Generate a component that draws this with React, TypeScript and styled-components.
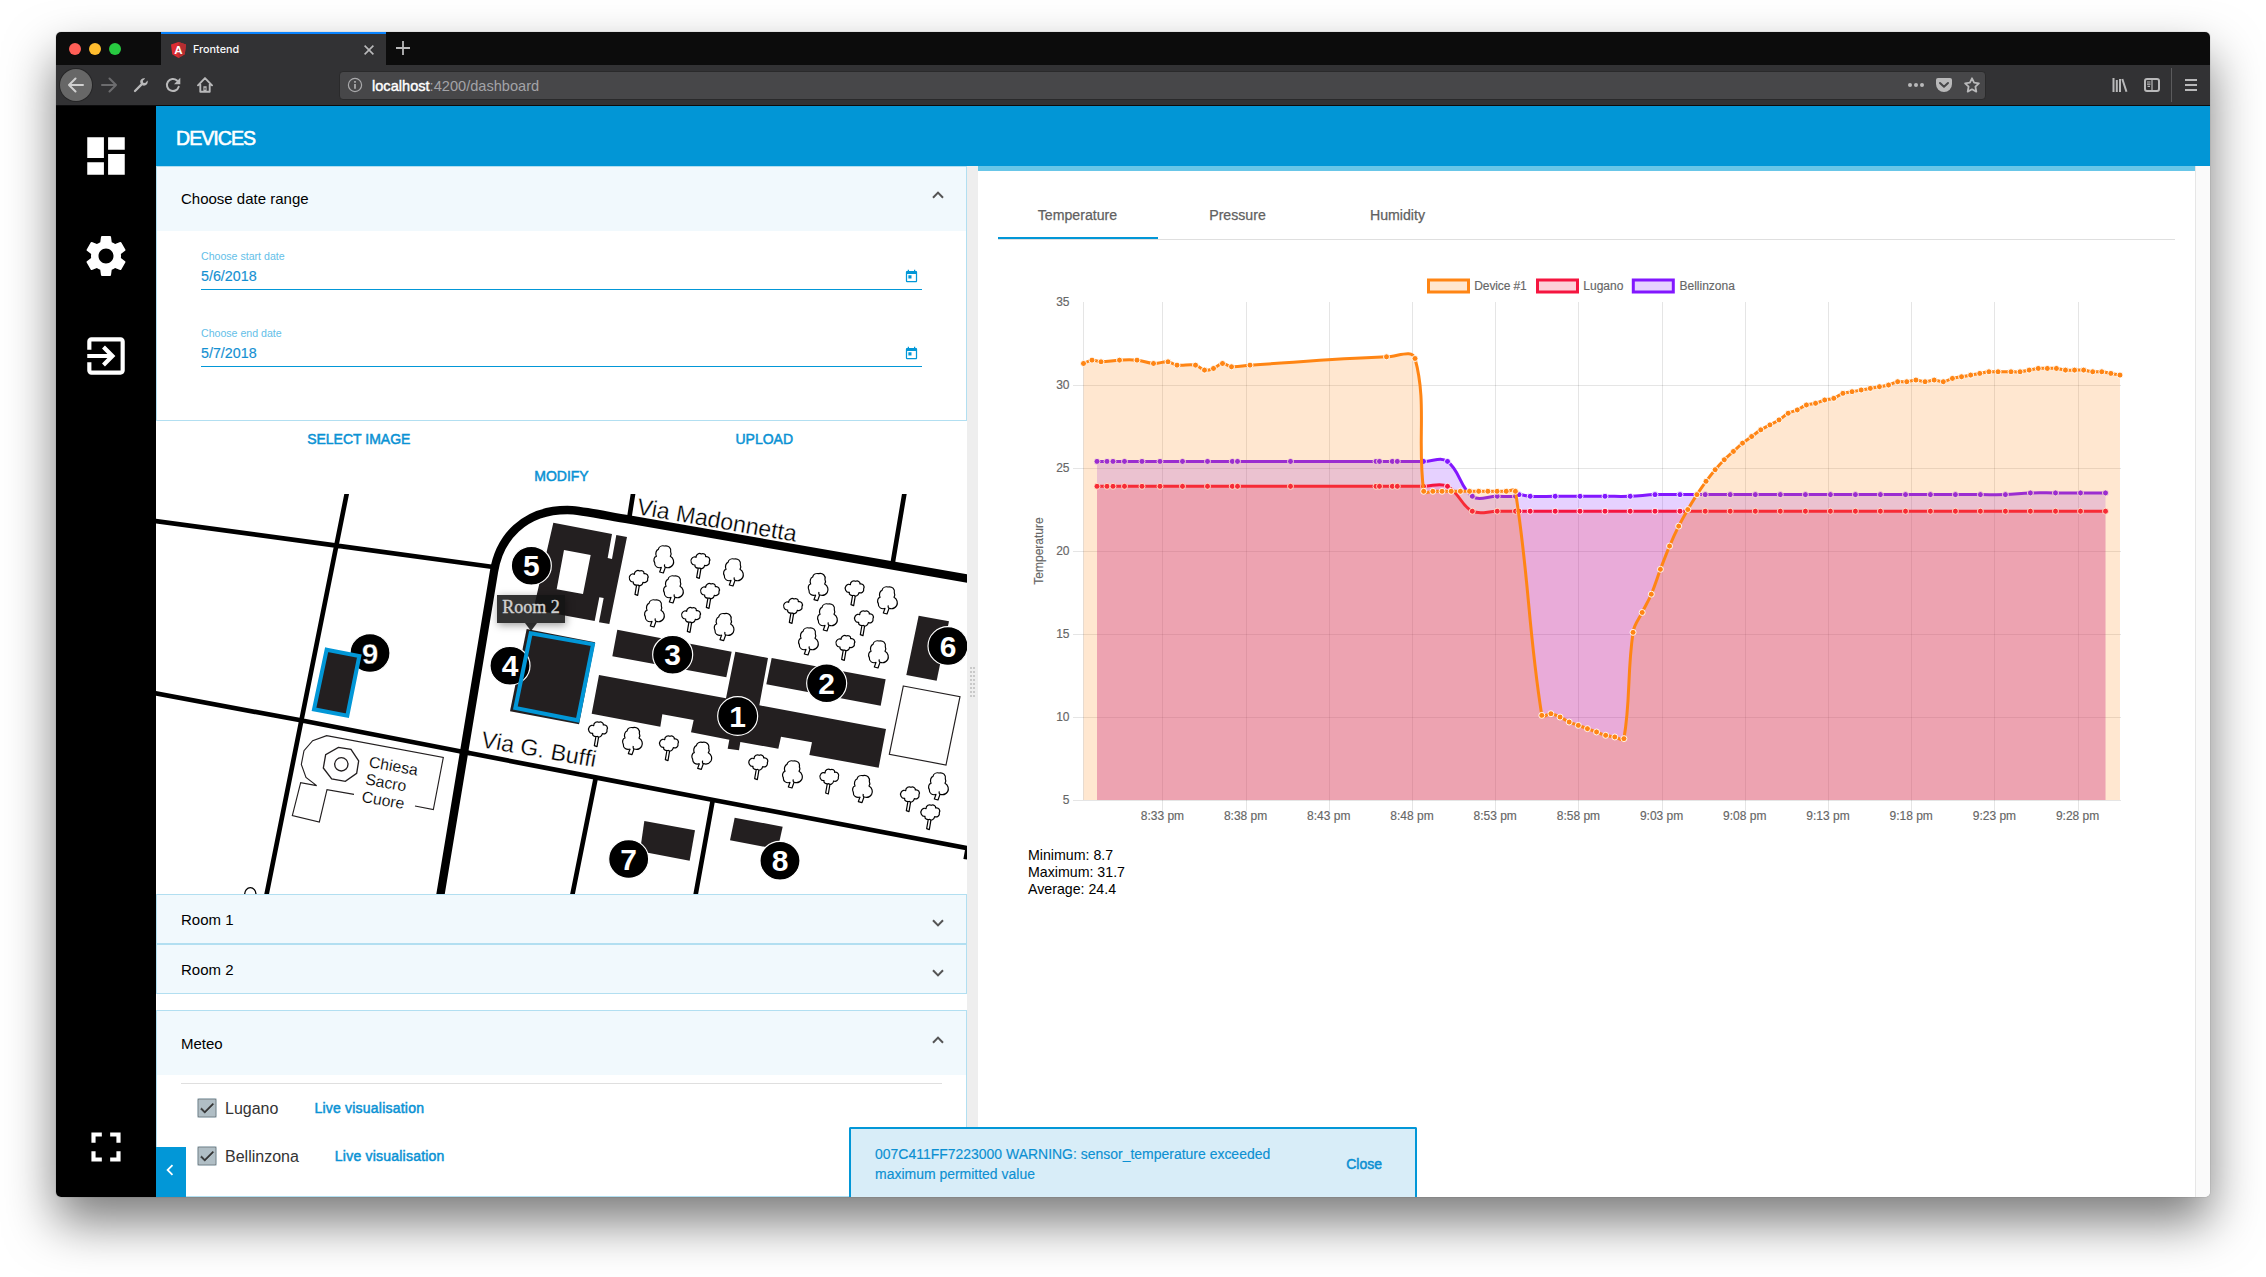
import React from "react";
import styled, { createGlobalStyle } from "styled-components";
import {
  MdDashboard,
  MdSettings,
  MdExitToApp,
  MdFullscreen,
  MdToday,
  MdChevronLeft,
  MdCheck,
} from "react-icons/md";

const BLUE = "#0297d7";
const PALE = "#f1f9fd";
const EDGE = "#b2dff1";
const INK = "#231f20";

const GlobalStyle = createGlobalStyle`
  html, body { margin: 0; padding: 0; background: #fff; overflow: hidden; }
  body { font-family: "Liberation Sans", Arial, Helvetica, sans-serif; color: #000; }
  *, *::before, *::after { box-sizing: border-box; }
  svg { display: block; flex: none; }
`;

/* ---------- window ---------- */

const Stage = styled.div`
  width: 2266px;
  height: 1277px;
  padding: 32px 56px 80px;
  overflow: hidden;
`;

const Window = styled.div`
  width: 2154px;
  height: 1165px;
  display: flex;
  flex-direction: column;
  border-radius: 5px;
  overflow: hidden;
  background: #fff;
  box-shadow: 0 0 1px rgba(0, 0, 0, 0.5), 0 25px 50px rgba(0, 0, 0, 0.52);
`;

const TabStrip = styled.div`
  height: 33px;
  flex: none;
  display: flex;
  background: #0c0c0c;
`;

const Lights = styled.div`
  width: 105px;
  padding-left: 13px;
  display: flex;
  align-items: center;
  gap: 8px;
`;

const Light = styled.span<{ $c: string }>`
  width: 12px;
  height: 12px;
  border-radius: 50%;
  margin-top: 1px;
  background: ${(p) => p.$c};
`;

const BrowserTab = styled.div`
  width: 225px;
  border-top: 2px solid #0a84ff;
  background: #323234;
  display: flex;
  align-items: center;
  padding: 0 12px 0 10px;
`;

const TabTitle = styled.span`
  flex: 1;
  margin-left: 7px;
  color: #f9f9fa;
  font: 500 10.8px/16px Inter, "Liberation Sans", sans-serif;
`;

const NewTab = styled.div`
  padding: 9px 0 0 10px;
`;

const Toolbar = styled.div`
  height: 41px;
  flex: none;
  display: flex;
  align-items: center;
  background: #323234;
  border-bottom: 1px solid #0c0c0d;
`;

const NavButtons = styled.div`
  width: 283px;
  padding-left: 4px;
  display: flex;
  align-items: center;
`;

const BackButton = styled.div`
  width: 32px;
  height: 32px;
  border-radius: 50%;
  background: #676767;
  box-shadow: 0 0 0 1px #262627;
  display: grid;
  place-items: center;
  margin-right: 1px;
`;

const NavIcon = styled.div`
  width: 32px;
  display: grid;
  place-items: center;
`;

const UrlBar = styled.div`
  width: 1647px;
  height: 29px;
  border-radius: 4px;
  background: #474749;
  border: 1px solid #2a2a2b;
  display: flex;
  align-items: center;
  padding: 0 5px 0 7px;
`;

const UrlText = styled.span`
  flex: 1;
  margin-left: 9px;
  padding-top: 2px;
  color: #a3a3a7;
  font-size: 14.6px;
  line-height: 20px;
  b {
    font-weight: 400;
    color: #fff;
    -webkit-text-stroke: 0.4px #fff;
  }
`;

const UrlIcons = styled.div`
  display: flex;
  gap: 12px;
  align-items: center;
`;

const ToolIcons = styled.div`
  flex: 1;
  display: flex;
  align-items: center;
  justify-content: flex-end;
  padding-right: 13px;
`;

const IconPair = styled.div`
  display: flex;
  gap: 16px;
`;

const Separator = styled.div`
  width: 1px;
  height: 34px;
  background: #5b5b5d;
  margin: 0 13px 0 11px;
`;

/* ---------- app shell ---------- */

const Shell = styled.div`
  flex: 1;
  display: flex;
  min-height: 0;
`;

const Sidebar = styled.nav`
  width: 100px;
  flex: none;
  background: #000;
  color: #fff;
  display: flex;
  flex-direction: column;
  align-items: center;
  gap: 50px;
  padding: 25px 0;
`;

const SideBottom = styled.div`
  margin-top: auto;
`;

const Main = styled.main`
  flex: 1;
  min-width: 0;
  display: flex;
  flex-direction: column;
  position: relative;
`;

const Header = styled.header`
  height: 60px;
  flex: none;
  background: #0296d6;
  color: #fff;
  padding: 5px 0 0 20px;
  display: flex;
  align-items: center;
  font-size: 19.6px;
  letter-spacing: -1px;
  -webkit-text-stroke: 0.6px #fff;
`;

const Split = styled.div`
  flex: 1;
  display: flex;
  min-height: 0;
`;

const LeftPane = styled.section`
  width: 811px;
  flex: none;
  display: flex;
  flex-direction: column;
`;

const Gutter = styled.div`
  width: 11px;
  flex: none;
  background: #eee;
  display: flex;
  padding: 501px 0 0 3px;
`;

const Grip = styled.div`
  display: grid;
  grid-template-columns: 2px 2px;
  grid-auto-rows: 2px;
  gap: 2px 1px;
  height: 30px;
`;

const Dot = styled.i`
  background: #c9c9c9;
`;

const RightPane = styled.section`
  flex: 1;
  border-top: 5px solid #68c6e8;
  padding: 20px 20px 0;
`;

const ScrollTrack = styled.div`
  width: 15px;
  flex: none;
  background: #fafafa;
  border-left: 1px solid #e6e6e6;
`;

/* ---------- expansion panels ---------- */

const Panel = styled.div<{ $h: number; $top?: number }>`
  height: ${(p) => p.$h}px;
  margin-top: ${(p) => p.$top ?? 0}px;
  flex: none;
  border: 1px solid ${EDGE};
  background: #fff;
`;

const PanelHead = styled.div<{ $h: number; $pad?: number }>`
  height: ${(p) => p.$h}px;
  background: ${PALE};
  display: flex;
  justify-content: space-between;
  align-items: center;
  padding: ${(p) => p.$pad ?? 0}px 22px 0 24px;
  font-size: 15px;
  line-height: 20px;
`;

const ChevronBox = styled.span<{ $dy: number }>`
  margin-top: ${(p) => p.$dy}px;
`;

const Field = styled.div<{ $top: number }>`
  margin: ${(p) => p.$top}px 44px 0;
`;

const FieldLabel = styled.div`
  height: 16px;
  font-size: 10.6px;
  line-height: 17px;
  color: #64c0e8;
`;

const FieldValue = styled.div`
  height: 26px;
  border-bottom: 1px solid ${BLUE};
  display: flex;
  align-items: center;
  justify-content: space-between;
  padding-right: 3px;
  font-size: 14.3px;
  line-height: 25px;
  color: #1490d2;
  -webkit-text-stroke: 0.15px #1490d2;
`;

const Actions = styled.div`
  height: 73px;
  flex: none;
  display: grid;
  grid-template-columns: 1fr 1fr;
  grid-template-rows: 36px 37px;
`;

const ActionLink = styled.div<{ $wide?: boolean }>`
  grid-column: ${(p) => (p.$wide ? "1 / -1" : "auto")};
  display: grid;
  place-items: center;
  color: #0a92d4;
  font-size: 14px;
  -webkit-text-stroke: 0.5px #0a92d4;
`;

const MapFrame = styled.div`
  position: relative;
  height: 400px;
  flex: none;
  overflow: hidden;
`;

const MapTip = styled.div`
  position: absolute;
  left: 341px;
  top: 101px;
  width: 68px;
  height: 28px;
  background: rgba(20, 20, 20, 0.87);
  color: #d0d0d0;
  font: 18px/25px "Liberation Serif", "Times New Roman", serif;
  -webkit-text-stroke: 0.4px #d0d0d0;
  text-align: center;
  box-shadow: 1px 2px 8px rgba(0, 0, 0, 0.4);
  &::after {
    content: "";
    position: absolute;
    left: 28px;
    top: 28px;
    border: 6px solid transparent;
    border-top: 8px solid rgba(20, 20, 20, 0.87);
    border-bottom: 0;
  }
`;

const Rule = styled.div`
  height: 1px;
  margin: 8px 24px 0;
  background: #dfdfdf;
`;

const CheckRow = styled.div<{ $top: number }>`
  margin: ${(p) => p.$top}px 0 0 40px;
  height: 20px;
  display: flex;
  align-items: center;
  font-size: 16px;
  line-height: 20px;
  color: #333;
`;

const CheckBox = styled.span`
  width: 20px;
  height: 20px;
  border-radius: 2px;
  margin-right: 8px;
  background: #b0bec5;
  display: grid;
  place-items: center;
  svg {
    stroke: #333;
    stroke-width: 0.6px;
  }
`;

const PlaceName = styled.span`
  padding-top: 1px;
`;

const LiveLink = styled.span`
  margin-left: 36px;
  color: #0a92d4;
  font-size: 14px;
  letter-spacing: 0.22px;
  -webkit-text-stroke: 0.5px #0a92d4;
`;

const Collapse = styled.div`
  position: absolute;
  left: 0;
  bottom: 0;
  width: 30px;
  height: 50px;
  background: ${BLUE};
  color: #fff;
  padding: 12px 0 0 3px;
`;

/* ---------- right side ---------- */

const Tabs = styled.div`
  display: flex;
  height: 49px;
  border-bottom: 1px solid #dfdfdf;
`;

const Tab = styled.div<{ $active?: boolean }>`
  width: 160px;
  height: 48px;
  border-bottom: 2px solid ${(p) => (p.$active ? BLUE : "transparent")};
  display: grid;
  place-items: center;
  padding: 2px 1px 0 0;
  color: #616161;
  font-size: 14.15px;
  -webkit-text-stroke: 0.25px #616161;
`;

const Stats = styled.div`
  padding: 7px 0 0 30px;
  font-size: 14.2px;
  line-height: 17px;
`;

const Toast = styled.div`
  position: absolute;
  left: 693px;
  bottom: 0;
  width: 568px;
  height: 70px;
  border: 2px solid ${BLUE};
  border-bottom: 0;
  border-radius: 2px 2px 0 0;
  background: #d8edf8;
  color: #0c90d2;
  display: flex;
  justify-content: space-between;
  align-items: center;
  padding: 1px 33px 0 24px;
  font-size: 13.97px;
  line-height: 20px;
  -webkit-text-stroke: 0.15px #0c90d2;
`;

const ToastText = styled.div`
  width: 410px;
`;

const ToastClose = styled.div`
  -webkit-text-stroke: 0.5px #0c90d2;
`;

/* ---------- small drawings ---------- */

const Chevron = ({ up }: { up?: boolean }) => (
  <svg width="12" height="8" viewBox="0 0 12 8" fill="none" stroke="#555" strokeWidth="2">
    <path d={up ? "M1 6.8 6 1.6l5 5.2" : "M1 1.2 6 6.4l5-5.2"} />
  </svg>
);

const Angular = () => (
  <svg width="15" height="16" viewBox="0 0 15 16">
    <path d="M7.5 0 0 2.6l1.2 9.7L7.5 16l6.3-3.7L15 2.6z" fill="#dd2c32" />
    <path d="M7.5 0v16l6.3-3.7L15 2.6z" fill="#b52e31" />
    <text x="7.5" y="12" fontSize="11.5" fontWeight="700" textAnchor="middle" fill="#fff">
      A
    </text>
  </svg>
);

const G = "#b9b9ba";

const ArrowIcon = ({ color, flip }: { color: string; flip?: boolean }) => (
  <svg
    width="16"
    height="16"
    viewBox="0 0 16 16"
    fill="none"
    stroke={color}
    strokeWidth="2"
    strokeLinecap="round"
    strokeLinejoin="round"
  >
    <path d={flip ? "M1 8h14M8.5 1.5 15 8l-6.5 6.5" : "M15 8H1M7.5 1.5 1 8l6.5 6.5"} />
  </svg>
);

const Wrench = () => (
  <svg width="16" height="16" viewBox="0 0 16 16">
    <path d="M2 14 8.6 7.4" stroke={G} strokeWidth="2.3" strokeLinecap="round" />
    <path
      d="M14.6 3.6 12.2 6 10.2 5.7 9.8 3.8l2.4-2.4C10 .6 7.3 2 7.2 4.6c0 .8.1 1.4.5 2L9.3 8.3c2.8 1.3 6.2-1 5.3-4.7z"
      fill={G}
    />
  </svg>
);

const Reload = () => (
  <svg width="16" height="16" viewBox="0 0 16 16">
    <path d="M13.7 9.7A6 6 0 1 1 12 3.6" fill="none" stroke={G} strokeWidth="2" strokeLinecap="round" />
    <path d="M15.3.8v6.4H9z" fill={G} />
  </svg>
);

const Home = () => (
  <svg
    width="16"
    height="16"
    viewBox="0 0 16 16"
    fill="none"
    stroke={G}
    strokeWidth="1.9"
    strokeLinejoin="round"
    strokeLinecap="round"
  >
    <path d="M1 8.3 8 1.1l7 7.2M3.3 7.6v7.1h9.4V7.6" />
    <path d="M6.4 14V9.2h3.2V14z" fill={G} stroke="none" />
    <path d="M8 11.2v1.2" stroke="#323234" strokeWidth="1" />
  </svg>
);

const Info = () => (
  <svg width="16" height="16" viewBox="0 0 16 16" fill="none" stroke="#a9a9ab" strokeWidth="1.2">
    <circle cx="8" cy="8" r="6.6" />
    <path d="M8 7v4.8M8 4v1.8" strokeWidth="1.8" />
  </svg>
);

const Library = () => (
  <svg width="16" height="16" viewBox="0 0 16 16" fill="none" stroke={G} strokeWidth="2">
    <path d="M1.5 1v14M4.8 3v12M8 2v13M10.3 2l4.2 12.8" />
  </svg>
);

const SidebarIcon = () => (
  <svg width="16" height="16" viewBox="0 0 16 16" fill="none" stroke={G}>
    <rect x="1" y="2" width="14" height="12" rx="2" strokeWidth="2" />
    <path d="M8 2v12M3 5h3.5M3 7.2h3.5M3.5 9.4h2.5" strokeWidth="1.2" />
  </svg>
);

/* ---------- campus map ---------- */

const WEST = "translate(-6 -14) scale(.33333)";
const EAST = "translate(324 -14) scale(.33333)";

const TALL_TREES = [
  [521, 196], [730, 235], [550, 286], [493, 358], [702, 399], [984, 279], [1192, 319], [1012, 370],
  [955, 442], [1165, 481], [427, 741], [635, 785], [907, 841], [1117, 885], [1345, 877],
];

const SMALL_TREES = [
  [632, 219], [447, 270], [661, 309], [604, 381], [1095, 301], [910, 354], [1123, 391], [1067, 465],
  [325, 724], [538, 766], [806, 823], [1019, 866], [1261, 919], [1322, 973],
];

const BADGES: [number, number, number][] = [
  [5, 154, 257], [4, 90, 557], [3, 578, 524], [2, 1040, 610], [1, 773, 708], [6, 1404, 498], [7, 446, 1137], [8, 900, 1142],
];

const Badge = ({ n, x, y }: { n: number; x: number; y: number }) => (
  <g>
    <ellipse cx={x} cy={y} rx="60" ry="58" fill="#000" stroke="#fff" strokeWidth="3.5" />
    <text x={x} y={y + 32} fontSize="90" fontWeight="700" textAnchor="middle" fill="#fff">
      {n}
    </text>
  </g>
);

const MapLabel = styled.text`
  font-family: "Liberation Sans", Arial, sans-serif;
  fill: #000;
  stroke: #fff;
`;

const CampusMap = () => (
  <svg width="811" height="400" viewBox="0 0 811 400">
    <g transform={EAST} fill="none" stroke="#000">
      <path d="M-123 1270 42 275C58 175 130 90 262 90c35 0 90 12 188 29l1030 180" strokeWidth="25" />
      <path d="M461 30 448 112M1275 30l-37 220M347 895l-73 365M698 962l-54 298M1463 1105l-6 33" strokeWidth="14" />
      <path d="M-60 814 350 893l350 67 770 146" strokeWidth="14" />
    </g>
    <g transform={WEST} fill="none" stroke="#000">
      <path d="M0 121 560 197l470 64M593 27 346 1262M0 637l452 84 508 99" strokeWidth="14" />
      <g stroke={INK} strokeWidth="3.4">
        <path d="M795 978l55 11 30-157-350-65-42 15-26 30-8 41 14 39 32 25-48-9-25 99 81 19 23-97 81 14" />
        <path d="M565 802l38 6 23 35-6 37-34 24-41-7-25-33 7-40z" strokeWidth="4" />
        <circle cx="574" cy="853" r="20" strokeWidth="4" />
        <ellipse cx="301" cy="1243" rx="17" ry="20" stroke="#000" strokeWidth="4" />
      </g>
      <MapLabel strokeWidth="0.4" fontSize="47.5" transform="translate(655 861) rotate(10)">Chiesa</MapLabel>
      <MapLabel strokeWidth="0.4" fontSize="47.5" transform="translate(644 913) rotate(10)">Sacro</MapLabel>
      <MapLabel strokeWidth="0.4" fontSize="47.5" transform="translate(633 965) rotate(10)">Cuore</MapLabel>
      <Badge n={9} x={660} y={519} />
      <path d="M530 509l98 19-36 179-100-19z" fill={INK} stroke={BLUE} strokeWidth="12" />
    </g>
    <g transform={EAST}>
      <g fill={INK}>
        <path
          fillRule="evenodd"
          d="M220 128l176 34-13 72 13 3 13-72 32 6-53 261-31-5 14-73-13-2-14 71-184-34zM252 210l80 15-23 117-79-14z"
        />
        <path d="M140 447l205 40-48 246-207-39z" />
        <path d="M412 449l343 66-16 77-342-63z" />
        <path d="M875 534l342 64-15 79-343-64z" />
        <path d="M357 585l381 70 28-140 98 19-26 142 380 71-22 116-208-38 8-38-93-17-8 36-114-20-4 25-34-5 5-27-115-22 8-37-94-17-6 37-206-39z" />
        <path d="M1316 407l91 17-37 178-91-17z" />
        <path d="M493 1023l152 28-16 91-149-28z" />
        <path d="M764 1013l144 27-15 68-143-27z" />
      </g>
      <path d="M1270 618l170 32-42 205-170-32z" fill="#fff" stroke={INK} strokeWidth="3.5" />
      <g fill="#fff" stroke="#000" strokeWidth="3.6" strokeLinejoin="round">
        {TALL_TREES.map(([x, y]) => (
          <g key={`${x}-${y}`} transform={`translate(${x} ${y})`}>
            <path d="M23 66 18 80l11 3 6-17" />
            <path d="M24 66C12 70 2 63 3 52 -2 44 2 34 8 33 4 24 8 14 14 12 16 4 24 0 32 2 44 -1 54 8 51 20 54 25 52 30 50 33 60 38 62 50 58 58 52 67 42 68 36 66 32 66 32 60 33 57" />
          </g>
        ))}
        {SMALL_TREES.map(([x, y]) => (
          <g key={`${x}-${y}`} transform={`translate(${x} ${y})`}>
            <path d="M23 44 18 73l8 3 5-30" />
            <path d="M13 36C3 37-3 24 3 17 6 11 13 11 16 13 16 3 26-1 32 3 38 0 46 4 45 11 54 9 60 18 56 25 58 34 49 40 42 37 40 47 31 49 27 45 19 47 11 43 13 36z" />
          </g>
        ))}
      </g>
      {BADGES.map(([n, x, y]) => (
        <Badge key={n} n={n} x={x} y={y} />
      ))}
      <path d="M152 460l187 33-46 228-187-37z" fill="none" stroke={BLUE} strokeWidth="12" />
      <MapLabel strokeWidth="0.8" fontSize="69.5" transform="translate(468 102) rotate(9.900)">
        Via Madonnetta
      </MapLabel>
      <MapLabel strokeWidth="0.8" fontSize="69.5" transform="translate(1 801) rotate(10)">
        Via G. Buffi
      </MapLabel>
    </g>
  </svg>
);

/* ---------- chart ---------- */

type Pt = { x: number; y: number };

const BASE = 302.05;
const yOf = (v: number) => BASE + (35 - v) * 16.6;

const ORANGE_DATA: [number, number][] = [
  [1083.5, 31.3], [1092, 31.5], [1101, 31.4], [1119.5, 31.5], [1137, 31.5], [1153.5, 31.3], [1168, 31.4],
  [1177, 31.2], [1195.5, 31.2], [1204.5, 30.9], [1213.5, 31], [1222.5, 31.3], [1231.5, 31.1], [1250, 31.2],
  [1386.5, 31.7], [1415, 31.6],
  ...Array.from({ length: 11 }, (_, i) => [1423.7 + i * 9.17, 23.6] as [number, number]),
  ...[10.1, 10.2, 10, 9.7, 9.5, 9.3, 9.1, 8.9, 8.8, 8.7, 15.1, 16.3, 17.4, 18.9, 20.3, 21.5, 22.5, 23.4, 24.2,
    24.9, 25.5, 26, 26.5, 26.9, 27.3, 27.6, 27.9, 28.3, 28.5, 28.8, 28.9, 29.1, 29.2, 29.5, 29.6, 29.7, 29.8,
    29.9, 30, 30.2, 30.2, 30.3, 30.2, 30.3, 30.2, 30.4, 30.5, 30.6, 30.7, 30.8, 30.8].map(
    (v, i) => [1541.8 + i * 9.125, v] as [number, number],
  ),
  ...[30.8, 30.8, 30.9, 31, 31, 31, 30.9, 30.9, 30.9, 30.8, 30.8, 30.7, 30.6].map(
    (v, i) => [2011 + i * 9.08, v] as [number, number],
  ),
];

const METEO_X = [
  1097, 1107, 1113, 1124.5, 1142, 1160, 1182.5, 1207.5, 1232.3, 1237.5, 1290.5, 1376, 1379.5, 1392.3, 1397.3, 1423.5,
  1447.5, 1472.3, 1497.2, 1515.5, 1519, 1530.2, 1555.2, 1580, 1605, 1630.2, 1655, 1680, 1705.2, 1730.2, 1755.3, 1780.3,
  1805.4, 1830.4, 1855.4, 1880.4, 1905.5, 1930.4, 1955.4, 1980.4, 2005.4, 2030.4, 2055.5, 2080.5, 2105.5,
];

const LUGANO = METEO_X.map((x, i) => [x, i < 17 ? 23.9 : 22.4] as [number, number]);

const BELLINZONA = METEO_X.map((x, i) => {
  if (i < 17) return [x, 25.4] as [number, number];
  if (i === 20) return [x, 23.4] as [number, number];
  if (i < 26) return [x, 23.3] as [number, number];
  return [x, i < 41 ? 23.4 : 23.5] as [number, number];
});

function spline(pts: Pt[], t = 0.4) {
  const ctl = pts.map((c, i) => {
    const p = pts[i - 1] ?? c;
    const n = pts[i + 1] ?? c;
    const d01 = Math.hypot(c.x - p.x, c.y - p.y);
    const d12 = Math.hypot(n.x - c.x, n.y - c.y);
    const sum = d01 + d12 || 1;
    const fa = (t * d01) / sum;
    const fb = (t * d12) / sum;
    return {
      a: { x: c.x - fa * (n.x - p.x), y: c.y - fa * (n.y - p.y) },
      b: { x: c.x + fb * (n.x - p.x), y: c.y + fb * (n.y - p.y) },
    };
  });
  return pts.reduce(
    (d, p, i) =>
      i === 0
        ? `M${p.x} ${p.y}`
        : `${d}C${ctl[i - 1].b.x} ${ctl[i - 1].b.y} ${ctl[i].a.x} ${ctl[i].a.y} ${p.x} ${p.y}`,
    "",
  );
}

const Series = ({ data, color }: { data: [number, number][]; color: string }) => {
  const pts = data.map(([x, v]) => ({ x, y: yOf(v) }));
  const line = spline(pts);
  return (
    <g>
      <path d={`${line}L${pts[pts.length - 1].x} 800L${pts[0].x} 800Z`} fill={color} fillOpacity="0.2" />
      <path d={line} fill="none" stroke={color} strokeWidth="3" strokeLinejoin="round" />
      {pts.map((p, i) => (
        <circle key={i} cx={p.x} cy={p.y} r="3" fill={color} stroke="#fff" strokeOpacity="0.9" strokeWidth="1" />
      ))}
    </g>
  );
};

const TIMES = ["8:33", "8:38", "8:43", "8:48", "8:53", "8:58", "9:03", "9:08", "9:13", "9:18", "9:23", "9:28"];

const LEGEND: [string, string, number, number][] = [
  ["Device #1", "#ff8514", 1428.5, 1474.3],
  ["Lugano", "#f5153f", 1537.5, 1583.3],
  ["Bellinzona", "#8217ff", 1633.3, 1679.5],
];

const ChartText = styled.text`
  font-family: "Liberation Sans", Arial, sans-serif;
  font-size: 12px;
  fill: #666;
  stroke: #666;
  stroke-width: 0.15px;
`;

const Chart = () => (
  <svg width="1177" height="600" viewBox="998 240 1177 600">
    <g stroke="rgba(0,0,0,0.1)">
      <path d="M1083.5 302V800" />
      {TIMES.map((t, i) => {
        const x = Math.round(1162.4 + i * 83.2) + 0.5;
        return <path key={t} d={`M${x} 302V811`} />;
      })}
      {[30, 25, 20, 15, 10, 5].map((v) => (
        <path key={v} d={`M1073 ${Math.floor(yOf(v)) + 0.5}H2121`} />
      ))}
    </g>
    {[35, 30, 25, 20, 15, 10, 5].map((v) => (
      <ChartText key={v} x="1069.5" y={yOf(v) + 3.6} textAnchor="end">
        {v}
      </ChartText>
    ))}
    {TIMES.map((t, i) => (
      <ChartText key={t} x={1162.4 + i * 83.2} y="819.7" textAnchor="middle">
        {t} pm
      </ChartText>
    ))}
    <ChartText transform="translate(1043 551) rotate(-90)" textAnchor="middle">
      Temperature
    </ChartText>
    {LEGEND.map(([name, color, x, tx]) => (
      <g key={name}>
        <rect x={x} y="280" width="40" height="12" fill={color} fillOpacity="0.2" stroke={color} strokeWidth="3" />
        <ChartText x={tx} y="290" textLength={name === "Device #1" ? 52.5 : undefined}>
          {name}
        </ChartText>
      </g>
    ))}
    <Series data={BELLINZONA} color="#8217ff" />
    <Series data={LUGANO} color="#f5153f" />
    <Series data={ORANGE_DATA} color="#ff8514" />
  </svg>
);

/* ---------- page ---------- */

const Browser = () => (
  <>
    <TabStrip>
      <Lights>
        <Light $c="#ff5f57" />
        <Light $c="#ffbd2e" />
        <Light $c="#28ca41" />
      </Lights>
      <BrowserTab>
        <Angular />
        <TabTitle>Frontend</TabTitle>
        <svg width="10" height="10" viewBox="0 0 10 10" stroke={G} strokeWidth="1.6">
          <path d="M.6.6l8.8 8.8M9.4.6.6 9.4" />
        </svg>
      </BrowserTab>
      <NewTab>
        <svg width="14" height="14" viewBox="0 0 14 14" stroke={G} strokeWidth="1.8">
          <path d="M7 0v14M0 7h14" />
        </svg>
      </NewTab>
    </TabStrip>
    <Toolbar>
      <NavButtons>
        <BackButton>
          <ArrowIcon color="#d0d0d0" />
        </BackButton>
        <NavIcon>
          <ArrowIcon color="#6c6c6e" flip />
        </NavIcon>
        <NavIcon>
          <Wrench />
        </NavIcon>
        <NavIcon>
          <Reload />
        </NavIcon>
        <NavIcon>
          <Home />
        </NavIcon>
      </NavButtons>
      <UrlBar>
        <Info />
        <UrlText>
          <b>localhost</b>:4200/dashboard
        </UrlText>
        <UrlIcons>
          <svg width="16" height="16" viewBox="0 0 16 16" fill={G}>
            <circle cx="2" cy="8" r="2" />
            <circle cx="8" cy="8" r="2" />
            <circle cx="14" cy="8" r="2" />
          </svg>
          <svg width="16" height="16" viewBox="0 0 16 16">
            <path d="M2 1h12a2 2 0 0 1 2 2v4A8 8 0 0 1 0 7V3a2 2 0 0 1 2-2z" fill={G} />
            <path
              d="M4 6l4 3.8L12 6"
              fill="none"
              stroke="#474749"
              strokeWidth="2"
              strokeLinecap="round"
              strokeLinejoin="round"
            />
          </svg>
          <svg width="16" height="16" viewBox="0 0 16 16" fill="none" stroke={G} strokeWidth="1.8" strokeLinejoin="round">
            <path d="M8 1.3l2.1 4.4 4.8.6-3.5 3.4.9 4.9L8 12.3l-4.3 2.3.9-4.900L1.1 6.300l4.800-.6z" />
          </svg>
        </UrlIcons>
      </UrlBar>
      <ToolIcons>
        <IconPair>
          <Library />
          <SidebarIcon />
        </IconPair>
        <Separator />
        <svg width="12" height="12" viewBox="0 0 12 12" stroke={G} strokeWidth="2">
          <path d="M0 1h12M0 6h12M0 11h12" />
        </svg>
      </ToolIcons>
    </Toolbar>
  </>
);

export default function App() {
  return (
    <>
      <GlobalStyle />
      <Stage>
        <Window>
          <Browser />
          <Shell>
            <Sidebar>
              <MdDashboard size={50} />
              <MdSettings size={50} />
              <MdExitToApp size={50} />
              <SideBottom>
                <MdFullscreen size={50} />
              </SideBottom>
            </Sidebar>
            <Main>
              <Header>DEVICES</Header>
              <Split>
                <LeftPane>
                  <Panel $h={255}>
                    <PanelHead $h={64}>
                      Choose date range
                      <ChevronBox $dy={-8}>
                        <Chevron up />
                      </ChevronBox>
                    </PanelHead>
                    <Field $top={17}>
                      <FieldLabel>Choose start date</FieldLabel>
                      <FieldValue>
                        5/6/2018
                        <MdToday size={15} color={BLUE} />
                      </FieldValue>
                    </Field>
                    <Field $top={35}>
                      <FieldLabel>Choose end date</FieldLabel>
                      <FieldValue>
                        5/7/2018
                        <MdToday size={15} color={BLUE} />
                      </FieldValue>
                    </Field>
                  </Panel>
                  <Actions>
                    <ActionLink>SELECT IMAGE</ActionLink>
                    <ActionLink>UPLOAD</ActionLink>
                    <ActionLink $wide>MODIFY</ActionLink>
                  </Actions>
                  <MapFrame>
                    <CampusMap />
                    <MapTip>Room 2</MapTip>
                  </MapFrame>
                  {["Room 1", "Room 2"].map((name) => (
                    <Panel key={name} $h={50}>
                      <PanelHead $h={48} $pad={2}>
                        {name}
                        <ChevronBox $dy={6}>
                          <Chevron />
                        </ChevronBox>
                      </PanelHead>
                    </Panel>
                  ))}
                  <Panel $h={187} $top={16}>
                    <PanelHead $h={64} $pad={2}>
                      Meteo
                      <ChevronBox $dy={-8}>
                        <Chevron up />
                      </ChevronBox>
                    </PanelHead>
                    <Rule />
                    <CheckRow $top={14}>
                      <CheckBox>
                        <MdCheck size={18} />
                      </CheckBox>
                      <PlaceName>Lugano</PlaceName>
                      <LiveLink>Live visualisation</LiveLink>
                    </CheckRow>
                    <CheckRow $top={28}>
                      <CheckBox>
                        <MdCheck size={18} />
                      </CheckBox>
                      <PlaceName>Bellinzona</PlaceName>
                      <LiveLink>Live visualisation</LiveLink>
                    </CheckRow>
                  </Panel>
                </LeftPane>
                <Gutter>
                  <Grip>
                    {Array.from({ length: 16 }, (_, i) => (
                      <Dot key={i} />
                    ))}
                  </Grip>
                </Gutter>
                <RightPane>
                  <Tabs>
                    <Tab $active>Temperature</Tab>
                    <Tab>Pressure</Tab>
                    <Tab>Humidity</Tab>
                  </Tabs>
                  <Chart />
                  <Stats>
                    <div>Minimum: 8.7</div>
                    <div>Maximum: 31.7</div>
                    <div>Average: 24.4</div>
                  </Stats>
                </RightPane>
                <ScrollTrack />
              </Split>
              <Collapse>
                <MdChevronLeft size={22} />
              </Collapse>
              <Toast>
                <ToastText>007C411FF7223000 WARNING: sensor_temperature exceeded maximum permitted value</ToastText>
                <ToastClose>Close</ToastClose>
              </Toast>
            </Main>
          </Shell>
        </Window>
      </Stage>
    </>
  );
}
